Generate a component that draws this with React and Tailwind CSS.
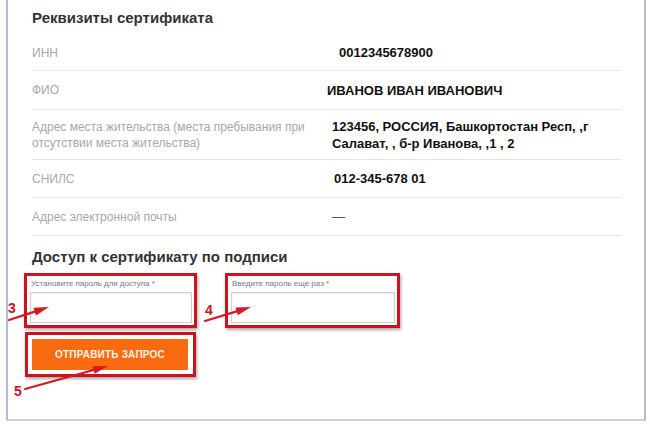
import React from "react";

const font = { fontFamily: '"Liberation Sans", Arial, sans-serif' };

const Arrow = ({ x1, y1, x2, y2 }) => {
  const dx = x2 - x1;
  const dy = y2 - y1;
  const len = Math.hypot(dx, dy);
  const ux = dx / len;
  const uy = dy / len;
  const nx = -uy;
  const ny = ux;
  const bx = x2 - ux * 15;
  const by = y2 - uy * 15;
  const head = `${x2},${y2} ${bx + nx * 4},${by + ny * 4} ${bx - nx * 4},${by - ny * 4}`;
  return (
    <g>
      <line x1={x1} y1={y1} x2={bx} y2={by} stroke="#d11a24" strokeWidth="2.2" strokeLinecap="round" />
      <polygon points={head} fill="#d11a24" />
    </g>
  );
};

const Row = ({ label, value, h, pl }) => (
  <div className={`flex items-center border-b border-[#e6e6e6] ${h}`}>
    <div className="w-[295px] shrink-0 text-[12px] leading-[16px] text-[#a8a8a8]">{label}</div>
    <div className={`text-[13px] font-bold leading-[17px] text-[#111] ${pl}`}>{value}</div>
  </div>
);

const Field = ({ label, w }) => (
  <div className={`${w} border-[3px] border-[#cc1421] px-[2px] pt-[2px] pb-[2px] shadow-[1px_2px_3px_rgba(0,0,0,0.35)]`}>
    <div className="pl-[2px] text-[8px] leading-[12px] text-[#6f7a88]">{label}</div>
    <div className="mt-[2px] ml-[1px] h-[31px] border border-[#cfcfcf] bg-white shadow-[inset_0_1px_2px_rgba(0,0,0,0.08)]" />
  </div>
);

export default function App() {
  return (
    <div className="relative h-[427px] w-[650px] overflow-hidden bg-white" style={font}>
      <div className="ml-[6px] h-[421px] w-[640px] border-x-2 border-b-2 border-x-[#b3bdd6] border-b-[#ccd0d8] pl-[24px] pr-[22px]">
        <div className="h-[35px] pt-[8px] text-[15px] font-bold leading-[20px] text-[#333]">
          Реквизиты сертификата
        </div>
        <Row label="ИНН" value="0012345678900" h="h-[36px]" pl="pl-[12px]" />
        <Row label="ФИО" value="ИВАНОВ ИВАН ИВАНОВИЧ" h="h-[39px]" pl="pl-0" />
        <Row
          label={<>Адрес места жительства (места пребывания при<br />отсутствии места жительства)</>}
          value={<>123456, РОССИЯ, Башкортостан Респ, ,г<br />Салават, , б-р Иванова, ,1 , 2</>}
          h="h-[50px]"
          pl="pl-[5px]"
        />
        <Row label="СНИЛС" value="012-345-678 01" h="h-[38px]" pl="pl-[7px]" />
        <Row label="Адрес электронной почты" value={<span className="font-normal text-[#555]">—</span>} h="h-[38px]" pl="pl-[5px]" />

        <div className="mt-[11px] text-[15px] font-bold leading-[20px] text-[#333]">
          Доступ к сертификату по подписи
        </div>
        <div className="mt-[6px] -ml-[8px] flex gap-[28px]">
          <Field label="Установите пароль для доступа *" w="w-[173px]" />
          <Field label="Введите пароль еще раз *" w="w-[175px]" />
        </div>
        <div className="mt-[4px] -ml-[7px] w-[171px] border-[3px] border-[#cc1421] pt-[4px] pr-[5px] pb-[4px] pl-[4px] shadow-[1px_2px_3px_rgba(0,0,0,0.35)]">
          <button className="flex h-[31px] w-[156px] items-center justify-center bg-[#fa6a10] text-[10px] font-bold tracking-[0.2px] text-[#fff4e8]">
            ОТПРАВИТЬ ЗАПРОС
          </button>
        </div>
      </div>

      <svg className="pointer-events-none absolute inset-0" width="650" height="427">
        <Arrow x1={9} y1={320} x2={49} y2={307} />
        <Arrow x1={205} y1={321} x2={251} y2={307} />
        <Arrow x1={25} y1={389} x2={108} y2={366} />
      </svg>
      <span className="absolute left-[8px] top-[300px] text-[14px] font-bold leading-[16px] text-[#c8141f]">3</span>
      <span className="absolute left-[205px] top-[302px] text-[14px] font-bold leading-[16px] text-[#c8141f]">4</span>
      <span className="absolute left-[14px] top-[383px] text-[14px] font-bold leading-[16px] text-[#c8141f]">5</span>
    </div>
  );
}
